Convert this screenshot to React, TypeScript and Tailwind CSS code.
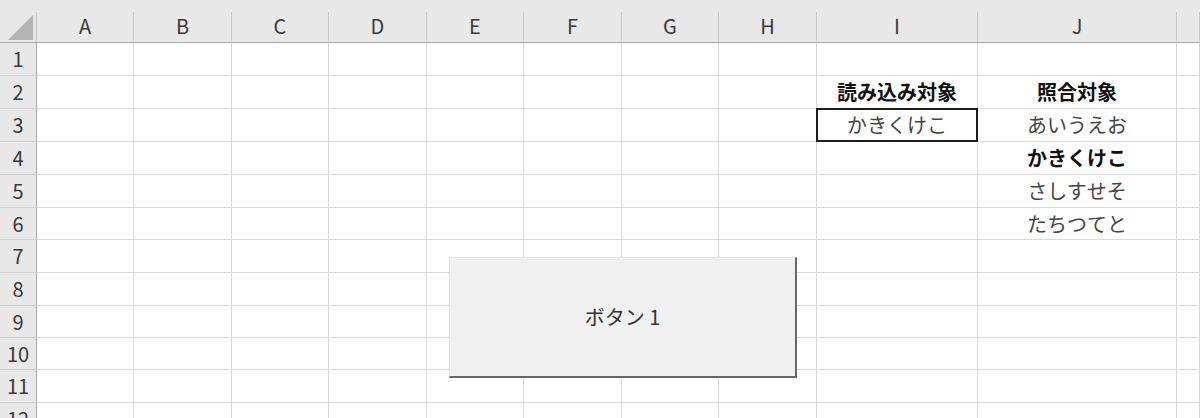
const cols = ['A', 'B', 'C', 'D', 'E', 'F', 'G', 'H', 'I', 'J', ''];
const colWidths = ['w-[97px]', 'w-[98px]', 'w-[97px]', 'w-[98px]', 'w-[97px]', 'w-[98px]', 'w-[97px]', 'w-[98px]', 'w-[161px]', 'w-[199px]', 'flex-1'];
const rowHeights = ['h-[33px]', 'h-[33px]', 'h-[33px]', 'h-[33px]', 'h-[33px]', 'h-[32px]', 'h-[33px]', 'h-[33px]', 'h-[32px]', 'h-[32px]', 'h-[33px]', 'h-[33px]'];

type Cell = { text: string; bold?: boolean; selected?: boolean };

// row index (1-based) -> column letter -> content
const data: Record<number, Record<string, Cell>> = {
  2: { I: { text: '読み込み対象', bold: true }, J: { text: '照合対象', bold: true } },
  3: { I: { text: 'かきくけこ', selected: true }, J: { text: 'あいうえお' } },
  4: { J: { text: 'かきくけこ', bold: true } },
  5: { J: { text: 'さしすせそ' } },
  6: { J: { text: 'たちつてと' } },
};

function HeaderRow() {
  return (
    <div className="flex h-[43px] bg-[#e8e8e8] border-b border-[#a8a8a8]">
      <div className="w-[37px] shrink-0 pt-[12px]">
        <div className="relative h-full border-r border-[#c4c4c4]">
          <svg className="absolute left-[8px] top-[3px]" width="26" height="26" viewBox="0 0 26 26">
            <polygon points="25,0 25,25 0,25" fill="#b4b4b4" />
          </svg>
        </div>
      </div>
      {cols.map((c, i) => (
        <div key={i} className={`${colWidths[i]} shrink-0 pt-[12px]`}>
          <div className="h-full flex items-center justify-center pb-[3px] border-r border-[#c8c8c8] text-[20px] text-[#3a3a3a]">
            {c}
          </div>
        </div>
      ))}
    </div>
  );
}

function BodyRow({ n }: { n: number }) {
  const row = data[n] || {};
  return (
    <div className={`flex ${rowHeights[n - 1]}`}>
      <div className="w-[37px] shrink-0 flex items-center justify-center bg-[#e8e8e8] border-r border-b border-r-[#a8a8a8] border-b-[#cfcfcf] text-[20px] text-[#3a3a3a]">
        {n}
      </div>
      {cols.map((c, i) => {
        const cell = row[c];
        return (
          <div
            key={i}
            className={`${colWidths[i]} shrink-0 relative flex items-center justify-center border-r border-b border-[#dadada] text-[20px] ${
              cell?.bold ? 'font-bold text-[#111]' : 'text-[#444]'
            }`}
          >
            {cell?.text}
            {cell?.selected && (
              <div className="absolute -left-px -top-px -right-px -bottom-px border-2 border-[#1e1e1e]" />
            )}
          </div>
        );
      })}
    </div>
  );
}

export default function App() {
  return (
    <div
      className="relative w-[1200px] h-[418px] overflow-hidden bg-white"
      style={{ fontFamily: '"Noto Sans CJK JP", "Noto Sans", sans-serif' }}
    >
      <HeaderRow />
      {Array.from({ length: 12 }, (_, i) => (
        <BodyRow key={i} n={i + 1} />
      ))}
      {/* form button floating over the sheet */}
      <div className="absolute left-[449px] top-[257px] w-[348px] h-[121px] flex items-center justify-center bg-[#f0f0f0] border-t border-l border-[#e2e2e2] border-r-2 border-b-2 border-r-[#666] border-b-[#666] text-[20px] text-[#333]">
        ボタン 1
      </div>
    </div>
  );
}
